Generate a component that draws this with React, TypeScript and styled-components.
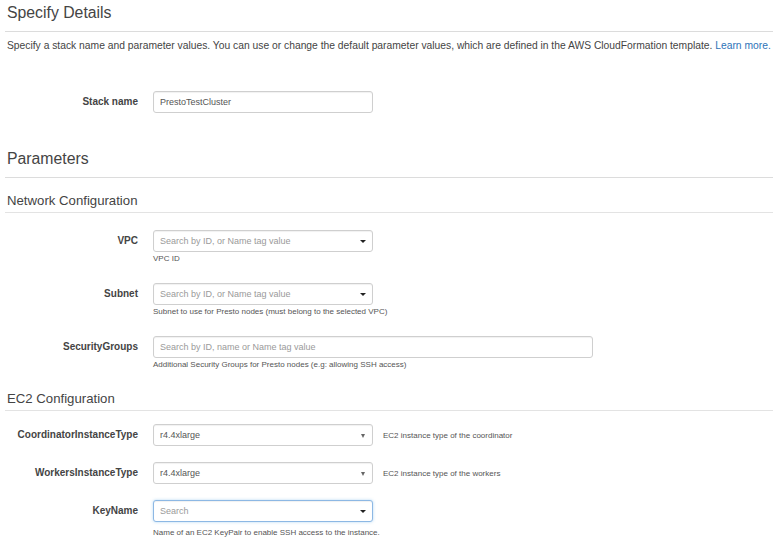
import styled, { createGlobalStyle } from "styled-components";

const GlobalStyle = createGlobalStyle`
  body {
    margin: 0;
    background: #fff;
    font-family: "Liberation Sans", Arial, sans-serif;
    color: #444;
  }
`;

const Page = styled.div`
  padding: 4px 5px 0;
`;

const PageTitle = styled.h1<{ $top?: number }>`
  margin: ${props => props.$top ?? 0}px 0 0;
  padding: 0 2px 9px;
  font-size: 15.8px;
  line-height: 18px;
  font-weight: normal;
  color: #444;
  border-bottom: 1px solid #dcdcdc;
`;

const SubTitle = styled.h2<{ $top: number }>`
  margin: ${props => props.$top}px 0 0;
  padding: 0 2px 4px;
  font-size: 13.2px;
  line-height: 15px;
  font-weight: normal;
  color: #444;
  border-bottom: 1px solid #e3e3e3;
`;

const Intro = styled.p`
  margin: 8px 0 0;
  padding: 0 2px;
  font-size: 10.3px;
  line-height: 12px;
  color: #444;

  & > a {
    color: #2e73b8;
    text-decoration: none;
  }
`;

const Row = styled.div<{ $top: number }>`
  display: grid;
  grid-template-columns: 133px 1fr;
  column-gap: 15px;
  margin-top: ${props => props.$top}px;
`;

const Label = styled.label`
  text-align: right;
  font-weight: bold;
  font-size: 10px;
  line-height: 22px;
  color: #444;
`;

const Field = styled.div`
  display: flex;
  flex-direction: column;
  align-items: flex-start;
`;

const InlineField = styled.div`
  display: flex;
  align-items: center;
`;

const InputWrap = styled.div<{ $width: number }>`
  position: relative;
  width: ${props => props.$width}px;
  height: 22px;
`;

const Input = styled.input<{ $focused?: boolean }>`
  box-sizing: border-box;
  width: 100%;
  height: 100%;
  margin: 0;
  padding: 0 18px 0 6px;
  border: 1px solid ${props => (props.$focused ? "#8db8e4" : "#cfcfcf")};
  border-radius: 3px;
  background: #fff;
  font-family: inherit;
  font-size: 9px;
  color: #555;
  outline: none;
  box-shadow: ${props =>
    props.$focused
      ? "inset 0 1px 1px rgba(0,0,0,.06), 0 0 3px rgba(102,175,233,.5)"
      : "inset 0 1px 1px rgba(0,0,0,.06)"};

  &::placeholder {
    color: #9a9a9a;
  }
`;

const Caret = styled.span<{ $light?: boolean }>`
  position: absolute;
  right: ${props => (props.$light ? 8 : 7)}px;
  top: 10px;
  width: 0;
  height: 0;
  border-left: ${props => (props.$light ? 2.5 : 3)}px solid transparent;
  border-right: ${props => (props.$light ? 2.5 : 3)}px solid transparent;
  border-top: ${props => (props.$light ? 4 : 3)}px solid
    ${props => (props.$light ? "#666" : "#222")};
  pointer-events: none;
`;

const Help = styled.div<{ $gap: number }>`
  margin-top: ${props => props.$gap}px;
  font-size: 8px;
  line-height: 11px;
  color: #555;
`;

const SideHelp = styled.span`
  margin-left: 10px;
  font-size: 8px;
  line-height: 11px;
  color: #555;
`;

interface SelectRowProps {
  top: number;
  label: string;
  value: string;
  help: string;
}

function InstanceRow({ top, label, value, help }: SelectRowProps) {
  return (
    <Row $top={top}>
      <Label>{label}</Label>
      <InlineField>
        <InputWrap $width={220}>
          <Input readOnly value={value} />
          <Caret $light />
        </InputWrap>
        <SideHelp>{help}</SideHelp>
      </InlineField>
    </Row>
  );
}

interface SearchRowProps {
  top: number;
  label: string;
  placeholder: string;
  help: string;
  width?: number;
  caret?: boolean;
  focused?: boolean;
  helpGap?: number;
}

function SearchRow({
  top,
  label,
  placeholder,
  help,
  width = 220,
  caret = true,
  focused,
  helpGap = 1
}: SearchRowProps) {
  return (
    <Row $top={top}>
      <Label>{label}</Label>
      <Field>
        <InputWrap $width={width}>
          <Input readOnly placeholder={placeholder} $focused={focused} />
          {caret && <Caret />}
        </InputWrap>
        <Help $gap={helpGap}>{help}</Help>
      </Field>
    </Row>
  );
}

export default function App() {
  return (
    <>
      <GlobalStyle />
      <Page>
        <PageTitle>Specify Details</PageTitle>
        <Intro>
          Specify a stack name and parameter values. You can use or change the
          default parameter values, which are defined in the AWS CloudFormation
          template. <a href="#">Learn more.</a>
        </Intro>

        <Row $top={39}>
          <Label>Stack name</Label>
          <Field>
            <InputWrap $width={220}>
              <Input readOnly value="PrestoTestCluster" />
            </InputWrap>
          </Field>
        </Row>

        <PageTitle $top={37}>Parameters</PageTitle>

        <SubTitle $top={15}>Network Configuration</SubTitle>
        <SearchRow
          top={17}
          label="VPC"
          placeholder="Search by ID, or Name tag value"
          help="VPC ID"
        />
        <SearchRow
          top={19}
          label="Subnet"
          placeholder="Search by ID, or Name tag value"
          help="Subnet to use for Presto nodes (must belong to the selected VPC)"
        />
        <SearchRow
          top={19}
          label="SecurityGroups"
          placeholder="Search by ID, name or Name tag value"
          help="Additional Security Groups for Presto nodes (e.g: allowing SSH access)"
          width={440}
          caret={false}
        />

        <SubTitle $top={21}>EC2 Configuration</SubTitle>
        <InstanceRow
          top={13}
          label="CoordinatorInstanceType"
          value="r4.4xlarge"
          help="EC2 instance type of the coordinator"
        />
        <InstanceRow
          top={16}
          label="WorkersInstanceType"
          value="r4.4xlarge"
          help="EC2 instance type of the workers"
        />
        <SearchRow
          top={16}
          label="KeyName"
          placeholder="Search"
          help="Name of an EC2 KeyPair to enable SSH access to the instance."
          focused
          helpGap={5}
        />
      </Page>
    </>
  );
}
